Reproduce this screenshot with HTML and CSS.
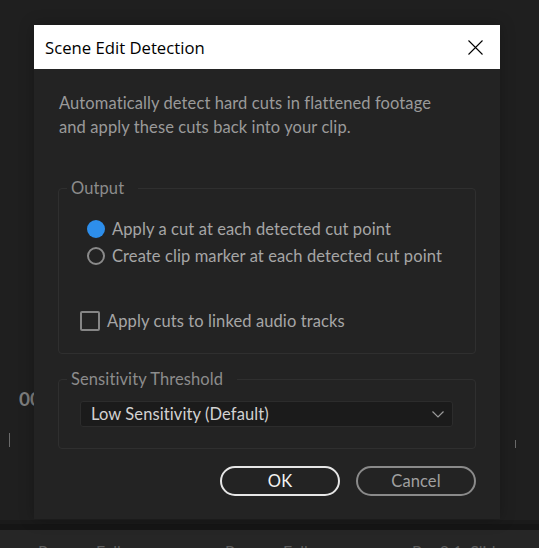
FILE: index.html
```html
<!DOCTYPE html>
<html lang="en">
<head>
    <meta name="viewport" content="width=device-width, initial-scale=1.0">
    <title>Scene Edit Detection</title>
    <link rel="stylesheet" href="styles.css">
</head>
<body>
    <div class="app">
        <div class="panel">
            <span class="timecode">00</span>
            <span class="tick tick-left"></span>
            <span class="tick tick-right"></span>
        </div>
        <div class="divider"></div>
        <div class="bottom-bar">
            <span>Process Full</span>
            <span>Process Full</span>
            <span>Por 2.1: Slid</span>
        </div>
    </div>

    <div class="dialog">
        <div class="titlebar">
            <span class="title">Scene Edit Detection</span>
            <svg class="close" width="15" height="15" viewBox="0 0 15 15">
                <path d="M0.5 0.5 L14.5 14.5 M14.5 0.5 L0.5 14.5" stroke="#000" stroke-width="1.1" fill="none"/>
            </svg>
        </div>
        <div class="dialog-body">
            <p class="description">Automatically detect hard cuts in flattened footage<br>and apply these cuts back into your clip.</p>

            <fieldset class="group">
                <legend>Output</legend>
                <div class="output-body">
                    <label class="option">
                        <span class="radio checked"></span>
                        Apply a cut at each detected cut point
                    </label>
                    <label class="option">
                        <span class="radio"></span>
                        Create clip marker at each detected cut point
                    </label>
                    <label class="option check-option">
                        <span class="checkbox"></span>
                        Apply cuts to linked audio tracks
                    </label>
                </div>
            </fieldset>

            <fieldset class="group sensitivity-group">
                <legend>Sensitivity Threshold</legend>
                <div class="sensitivity-body">
                    <div class="select">
                        <span>Low Sensitivity (Default)</span>
                        <svg width="12" height="7" viewBox="0 0 12 7">
                            <path d="M0.5 0.5 L6 6 L11.5 0.5" stroke="#9a9a9a" stroke-width="1.2" fill="none"/>
                        </svg>
                    </div>
                </div>
            </fieldset>

            <div class="actions">
                <button type="button" class="btn btn-primary">OK</button>
                <button type="button" class="btn">Cancel</button>
            </div>
        </div>
    </div>
</body>
</html>
```

FILE: styles.css
```css
* {
    margin: 0;
    padding: 0;
    box-sizing: border-box;
}
body {
    width: 539px;
    height: 548px;
    overflow: hidden;
    background: #1f1f1f;
    font-family: 'Lato', 'Open Sans', sans-serif;
    position: relative;
}
.app {
    display: flex;
    flex-direction: column;
    height: 548px;
}
.panel {
    flex-shrink: 0;
    height: 520px;
    background: #1f1f1f;
    position: relative;
}
.timecode {
    position: absolute;
    left: 19px;
    top: 387px;
    font-size: 19px;
    font-weight: bold;
    color: #7d7d7d;
}
.tick {
    position: absolute;
    width: 1px;
    height: 14px;
    background: #6a6a6a;
}
.tick-left {
    left: 9px;
    top: 433px;
}
.tick-right {
    left: 515px;
    top: 440px;
    height: 8px;
}
.divider {
    flex-shrink: 0;
    height: 10px;
    background: #151515;
    border-top: 4px solid #1a1a1a;
}
.bottom-bar {
    flex-shrink: 0;
    height: 40px;
    background: #262626;
    display: flex;
    gap: 87px;
    padding: 11px 0 0 38px;
    font-size: 16px;
    line-height: 19px;
    color: #5e5e5e;
    white-space: nowrap;
}
.bottom-bar span {
    width: 100px;
}

.dialog {
    position: absolute;
    left: 34px;
    top: 25px;
    width: 466px;
    box-shadow: 0 0 14px rgba(0, 0, 0, 0.25);
}
.titlebar {
    height: 44px;
    background: #fff;
    display: flex;
    align-items: center;
    justify-content: space-between;
    padding: 0 17px 0 11px;
}
.title {
    font-family: 'Open Sans', sans-serif;
    font-size: 16.7px;
    color: #000;
}
.dialog-body {
    background: #232323;
    padding: 22px 24px 23px;
    font-size: 16.5px;
    letter-spacing: 0.1px;
}
.description {
    line-height: 24px;
    color: #9a9a9a;
    padding-left: 1px;
    margin-bottom: 38px;
}
.group {
    border: 1px solid #2f2f2f;
    border-radius: 4px;
}
.group legend {
    margin-left: 8px;
    padding: 0 14px 0 4px;
    line-height: 22px;
    color: #8c8c8c;
}
.output-body {
    padding: 16px 0 19px 28px;
}
.option {
    display: flex;
    align-items: center;
    gap: 7px;
    height: 27px;
    color: #a6a6a6;
}
.radio {
    width: 18px;
    height: 18px;
    border-radius: 50%;
    border: 2.5px solid #8a8a8a;
}
.radio.checked {
    border: none;
    background: #2d8eeb;
}
.check-option {
    margin: 38px 0 0 -7px;
}
.checkbox {
    width: 20px;
    height: 20px;
    border: 2.5px solid #858585;
    border-radius: 2px;
}
.sensitivity-group {
    margin-top: 14px;
}
.sensitivity-body {
    padding: 11px 22px 21px 21px;
}
.select {
    height: 26px;
    background: #1b1b1b;
    border: 1px solid #2c2c2c;
    border-radius: 3px;
    display: flex;
    align-items: center;
    justify-content: space-between;
    padding: 0 8px 0 10px;
    color: #d2d2d2;
}
.actions {
    display: flex;
    justify-content: flex-end;
    gap: 16px;
    margin-top: 17px;
}
.btn {
    width: 120px;
    height: 30px;
    border-radius: 15px;
    border: 2px solid #8a8a8a;
    background: transparent;
    font-family: 'Lato', 'Open Sans', sans-serif;
    font-size: 16.5px;
    letter-spacing: 0.1px;
    color: #a0a0a0;
}
.btn-primary {
    border-color: #e6e6e6;
    color: #f2f2f2;
}
```
